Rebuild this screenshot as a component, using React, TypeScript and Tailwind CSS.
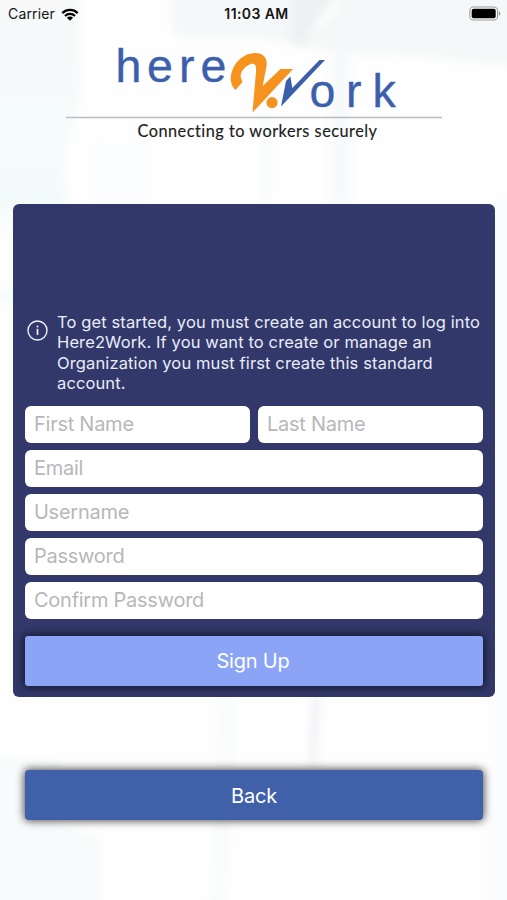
import { useState } from 'react';

const fields = [
  { name: 'firstName', label: 'First Name', type: 'text', wide: false },
  { name: 'lastName', label: 'Last Name', type: 'text', wide: false },
  { name: 'email', label: 'Email', type: 'email', wide: true },
  { name: 'username', label: 'Username', type: 'text', wide: true },
  { name: 'password', label: 'Password', type: 'password', wide: true },
  { name: 'confirmPassword', label: 'Confirm Password', type: 'password', wide: true },
];

function Backdrop() {
  return (
    <svg className="absolute inset-0 w-full h-full" viewBox="0 0 507 900" preserveAspectRatio="none" aria-hidden="true">
      <defs>
        <filter id="soft" x="-20%" y="-20%" width="140%" height="140%">
          <feGaussianBlur stdDeviation="4" />
        </filter>
        <linearGradient id="left" x1="0" y1="0" x2="0" y2="1">
          <stop offset="0" stopColor="#f8f9f9" />
          <stop offset="0.7" stopColor="#f6fbfc" />
          <stop offset="0.85" stopColor="#f2fbfa" />
          <stop offset="1" stopColor="#fcfefe" />
        </linearGradient>
      </defs>
      <g filter="url(#soft)">
        <path d="M-10-10H80V100L66 145V235H-10Z" fill="url(#left)" />
        <path d="M172-10H520V66L400 54H335V210H330V52L253 36H172Z" fill="#f5f8f8" />
        <path d="M292-10H343L308 38L302 48L290 42Z" fill="#eff0f2" />
        <path d="M332 0L344-2L326 22L306 39Z" fill="#fff" />
        <path d="M330 50H350V205H330Z" fill="#f7f9fb" />
        <path d="M260 100H270V205H260Z" fill="#f9fcfc" />
        <path d="M94 145H148V205H94Z" fill="#fbfdfe" />
        <path d="M-10 292H16V300H-10Z" fill="#f2f9f9" />
        <path d="M-10 758L60 761V825L100 838V910H-10Z" fill="#f8fbfb" />
        <path d="M218 695H236L227 910H211Z" fill="#f9fcfc" />
        <path d="M312 695H320L316 770H310Z" fill="#eff1f5" />
        <path d="M495 200H515V910H489V825L495 760Z" fill="#fafcfd" />
      </g>
    </svg>
  );
}

function StatusBar() {
  return (
    <div className="grid grid-cols-3 items-center h-7 pl-2 pr-1.5 font-['Inter','Liberation_Sans',sans-serif] text-[#151515]">
      <div className="flex items-center gap-1.5">
        <span className="text-[14px] leading-none tracking-[0.15px]">Carrier</span>
        <svg className="w-[18px] h-[13px]" viewBox="0 0 18 13" fill="none" stroke="#000" strokeWidth="2.2">
          <path d="M1.3 5.1a11 11 0 0 1 15.4 0" />
          <path d="M4 8a7.1 7.1 0 0 1 10 0" />
          <path d="M9 12.8 5.9 9.8a4.4 4.4 0 0 1 6.2 0Z" fill="#000" stroke="none" />
        </svg>
      </div>
      <span className="pl-1 text-center text-[14px] leading-none tracking-[0.4px] font-semibold whitespace-nowrap">11:03 AM</span>
      <svg className="justify-self-end w-8 h-4" viewBox="0 0 32 16">
        <rect x="0.9" y="1" width="27.6" height="13" rx="3.6" fill="#fff" stroke="#999" strokeWidth="1.1" />
        <rect x="2.7" y="2.8" width="24" height="9.4" rx="2" fill="#000" />
        <path d="M29.8 5.2c2 .8 2 3.8 0 4.6Z" fill="#999" />
      </svg>
    </div>
  );
}

function Logo() {
  return (
    <svg className="w-[376px] h-[106px] ml-[66px] mt-3" viewBox="66 40 376 106" role="img" aria-label="here2Work">
      <g
        fill="#3c5fad"
        stroke="#3c5fad"
        strokeWidth="0.4"
        fontFamily="'Liberation Sans', Arial, sans-serif"
        fontSize="46.5"
      >
        <text x="115.5 147 179 200.5" y="82">here</text>
        <text x="309.5 346 372.5" y="107">ork</text>
      </g>
      <path
        d="M235.5 90C231 86 229.5 79 231.8 72C234.5 62 244 53 255 53C264 53 267.8 59 266.5 66L262.7 86L280.5 69H293L252.5 112.500L256 72C256.5 65.500 255.5 62.800 251 64C245 66 240 72 240.7 77L242.5 82Z"
        fill="#f6921e"
      />
      <circle cx="272" cy="102.6" r="5.6" fill="#f6921e" />
      <path d="M281 106.5L286 81L290.4 76.5L292.3 88L319.5 60H325Z" fill="#3c5fad" />
      <path d="M66 117.5H442" stroke="#b9bcbd" strokeWidth="1.3" />
      <text
        x="137.5"
        y="137"
        textLength="239.5"
        fontFamily="Lato, 'Liberation Sans', sans-serif"
        fontSize="16.3"
        fill="#1c1c1c"
        stroke="#1c1c1c"
        strokeWidth="0.15"
        style={{ fontVariantLigatures: 'none' }}
      >
        Connecting to workers securely
      </text>
    </svg>
  );
}

export default function App() {
  const [values, setValues] = useState<Record<string, string>>({});

  return (
    <div className="relative w-full h-[900px] overflow-hidden bg-[#fefefe] font-['Inter','Liberation_Sans',sans-serif]">
      <Backdrop />
      <div className="relative">
        <StatusBar />
        <Logo />

        <form
          className="mt-[58px] ml-[13px] mr-3 h-[493px] rounded-[6px] bg-[#323869] px-3 pt-[108px]"
          onSubmit={(e) => e.preventDefault()}
        >
          <div className="flex pl-0.5 h-[94px]">
            <svg className="w-[21px] h-[21px] mt-2 mr-[9px] shrink-0" viewBox="0 0 21 21" fill="none" stroke="#f0f2fc">
              <circle cx="10.5" cy="10.5" r="9.5" strokeWidth="1.4" />
              <path d="M10.5 8.8V14.9" strokeWidth="1.7" />
              <circle cx="10.5" cy="6.5" r="1" fill="#f0f2fc" stroke="none" />
            </svg>
            <p className="text-[16.5px] leading-[20.3px] tracking-[0.12px] text-[#e9ecfb] whitespace-nowrap">
              To get started, you must create an account to log into
              <br />
              Here2Work. If you want to create or manage an
              <br />
              Organization you must first create this standard
              <br />
              account.
            </p>
          </div>

          <div className="grid grid-cols-2 gap-x-2 gap-y-[7px]">
            {fields.map((field) => (
              <input
                key={field.name}
                type={field.type}
                placeholder={field.label}
                value={values[field.name] || ''}
                onChange={(e) => setValues({ ...values, [field.name]: e.target.value })}
                className={`h-[37px] min-w-0 rounded-[6px] bg-white px-[9px] pb-[2px] text-[20px] tracking-[-0.26px] text-gray-900 placeholder:text-[#b7b7b9] outline-none ${
                  field.wide ? 'col-span-2' : ''
                }`}
              />
            ))}
          </div>

          <button
            type="submit"
            className="mt-[17px] w-full h-[50px] rounded-[3px] bg-[#8ba4f5] pr-[2px] text-[20px] tracking-[-0.2px] text-white shadow-[0_0_8px_1px_rgba(0,0,0,0.65)]"
          >
            Sign Up
          </button>
        </form>

        <div className="mt-[73px] ml-[25px] mr-6">
          <button
            type="button"
            className="w-full h-[50px] rounded-[4px] bg-[#4060aa] pt-[2px] text-[20px] tracking-[-0.2px] text-white shadow-[0_0_9px_1px_rgba(0,0,0,0.7)]"
          >
            Back
          </button>
        </div>
      </div>
    </div>
  );
}
